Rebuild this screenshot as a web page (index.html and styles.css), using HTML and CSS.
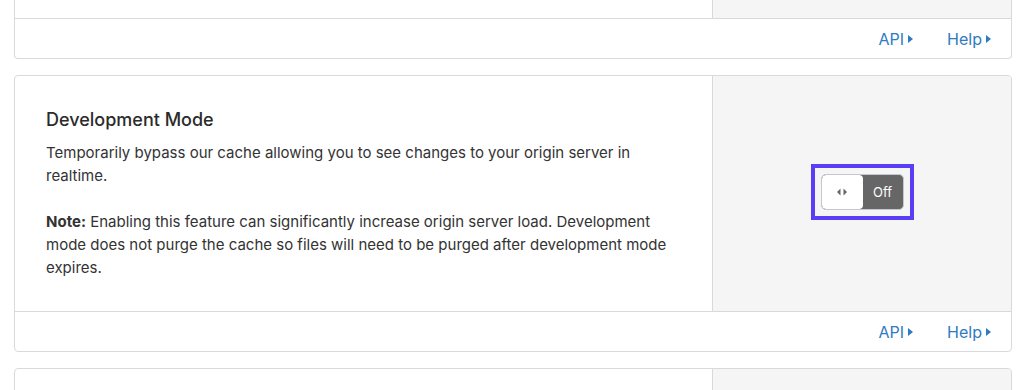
FILE: index.html
```html
<!DOCTYPE html>
<html lang="en">
<head>
<meta charset="utf-8">
<title>Development Mode</title>
<link rel="stylesheet" href="styles.css">
</head>
<body>
<div class="page">
  <section class="card card--clipped">
    <div class="card-body card-body--stub">
      <div class="card-main"></div>
      <div class="card-side"></div>
    </div>
    <div class="card-footer">
      <a class="link" href="#">API<span class="caret"></span></a>
      <a class="link" href="#">Help<span class="caret"></span></a>
    </div>
  </section>

  <section class="card">
    <div class="card-body">
      <div class="card-main">
        <h3 class="title">Development Mode</h3>
        <p class="text">Temporarily bypass our cache allowing you to see changes to your origin server in realtime.</p>
        <p class="text"><strong class="note-label">Note:</strong> Enabling this feature can significantly increase origin server load. Development mode does not purge the cache so files will need to be purged after development mode expires.</p>
      </div>
      <div class="card-side">
        <div class="focus-ring">
          <div class="toggle">
            <span class="toggle-knob">
              <svg width="10" height="8" viewBox="0 0 10 8" aria-hidden="true"><path d="M3.5 0.5 L0 4 L3.5 7.5 Z M6.5 0.5 L10 4 L6.5 7.5 Z" fill="#666"/></svg>
            </span>
            <span class="toggle-state">Off</span>
          </div>
        </div>
      </div>
    </div>
    <div class="card-footer">
      <a class="link" href="#">API<span class="caret"></span></a>
      <a class="link" href="#">Help<span class="caret"></span></a>
    </div>
  </section>

  <section class="card card--tail">
    <div class="card-body card-body--stub">
      <div class="card-main"></div>
      <div class="card-side"></div>
    </div>
  </section>
</div>
</body>
</html>
```

FILE: styles.css
```css
* { box-sizing: border-box; }

html, body {
  margin: 0;
  padding: 0;
  background: #ffffff;
  overflow: hidden;
}

body {
  font-family: Inter, "Noto Sans", "Liberation Sans", sans-serif;
  color: #333333;
  font-size: 15px;
}

.page {
  width: 998px;
  margin-left: 14px;
  display: flex;
  flex-direction: column;
  gap: 16px;
}

.card {
  border: 1px solid #d9d9d9;
  border-radius: 4px;
  background: #ffffff;
  overflow: hidden;
}

.card--clipped {
  border-top: 0;
  border-top-left-radius: 0;
  border-top-right-radius: 0;
}

.card-body {
  display: flex;
}

.card-body--stub {
  height: 18px;
}

.card--tail .card-body--stub {
  height: 120px;
}

.card-main {
  width: 697px;
  padding: 32px 32px 32px 31px;
}

.card-body--stub .card-main { padding: 0; }

.card-side {
  flex: 1;
  background: #f5f5f5;
  border-left: 1px solid #d9d9d9;
  display: flex;
  align-items: center;
  justify-content: center;
}

.title {
  margin: 0 0 9px;
  font-size: 18px;
  line-height: 24px;
  font-weight: 500;
  color: #2b2b2b;
}

.text {
  margin: 0;
  max-width: 630px;
  font-size: 15px;
  line-height: 23px;
  color: #333333;
}

.text + .text { margin-top: 23px; }

.note-label { font-weight: 700; }

.card-footer {
  height: 40px;
  border-top: 1px solid #d9d9d9;
  display: flex;
  align-items: center;
  justify-content: flex-end;
  gap: 34px;
  padding-right: 20px;
}

.link {
  color: #2f7bbf;
  text-decoration: none;
  font-size: 16px;
  display: inline-flex;
  align-items: center;
}

.caret {
  display: inline-block;
  margin-left: 4px;
  width: 0;
  height: 0;
  border-top: 4px solid transparent;
  border-bottom: 4px solid transparent;
  border-left: 5px solid #2f7bbf;
}

.focus-ring {
  border: 4px solid #5a3ef5;
  padding: 6px;
  margin-top: -4px;
}

.toggle {
  display: flex;
  width: 83px;
  height: 36px;
  border: 1px solid #c8c8c8;
  border-radius: 5px;
  overflow: hidden;
  background: #666666;
}

.toggle-knob {
  width: 41px;
  background: #ffffff;
  border-radius: 4px;
  display: flex;
  align-items: center;
  justify-content: center;
}

.toggle-state {
  flex: 1;
  color: #ffffff;
  font-size: 13px;
  display: flex;
  align-items: center;
  justify-content: center;
}
```
